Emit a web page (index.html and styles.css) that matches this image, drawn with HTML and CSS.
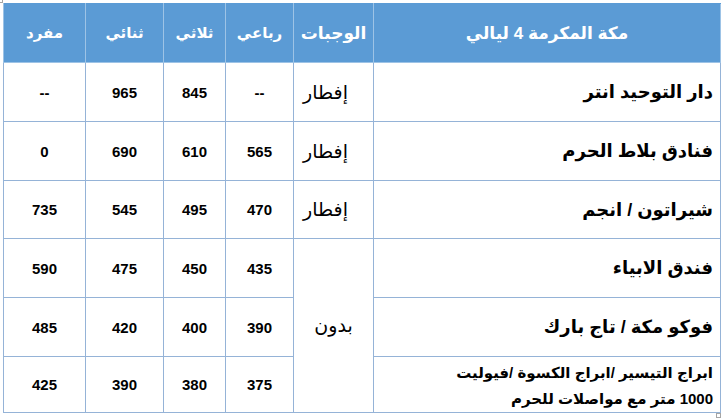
FILE: index.html
```html
<!DOCTYPE html>
<html lang="ar">
<head>
<meta charset="utf-8">
<link rel="stylesheet" href="styles.css">
</head>
<body>
<div class="page">
  <span class="handle handle-tl"></span>
  <table class="prices" dir="rtl">
    <colgroup>
      <col class="c-hotel">
      <col class="c-meal">
      <col class="c-quad">
      <col class="c-tri">
      <col class="c-dbl">
      <col class="c-sgl">
    </colgroup>
    <thead>
      <tr class="r-head">
        <th class="th-title">مكة المكرمة 4 ليالي</th>
        <th class="th-meal">الوجبات</th>
        <th>رباعي</th>
        <th>ثلاثي</th>
        <th>ثنائي</th>
        <th>مفرد</th>
      </tr>
    </thead>
    <tbody>
      <tr class="r1">
        <td class="hotel">دار التوحيد انتر</td>
        <td class="meal meal-side">إفطار</td>
        <td class="num">--</td>
        <td class="num">845</td>
        <td class="num">965</td>
        <td class="num">--</td>
      </tr>
      <tr class="r2">
        <td class="hotel">فنادق بلاط الحرم</td>
        <td class="meal meal-side">إفطار</td>
        <td class="num">565</td>
        <td class="num">610</td>
        <td class="num">690</td>
        <td class="num">0</td>
      </tr>
      <tr class="r3">
        <td class="hotel">شيراتون / انجم</td>
        <td class="meal meal-side">إفطار</td>
        <td class="num">470</td>
        <td class="num">495</td>
        <td class="num">545</td>
        <td class="num">735</td>
      </tr>
      <tr class="r4">
        <td class="hotel">فندق الابياء</td>
        <td class="meal" rowspan="3">بدون</td>
        <td class="num">435</td>
        <td class="num">450</td>
        <td class="num">475</td>
        <td class="num">590</td>
      </tr>
      <tr class="r5">
        <td class="hotel">فوكو مكة / تاج بارك</td>
        <td class="num">390</td>
        <td class="num">400</td>
        <td class="num">420</td>
        <td class="num">485</td>
      </tr>
      <tr class="r6">
        <td class="hotel hotel-2l">ابراج التيسير /ابراج الكسوة /فيوليت<br>1000 متر مع مواصلات للحرم</td>
        <td class="num">375</td>
        <td class="num">380</td>
        <td class="num">390</td>
        <td class="num">425</td>
      </tr>
    </tbody>
  </table>
  <span class="handle handle-br"></span>
</div>
</body>
</html>
```
FILE: styles.css
```css
html, body {
  margin: 0;
  padding: 0;
  background: #ffffff;
}

.page {
  position: relative;
  width: 725px;
  height: 420px;
  padding: 3px 0 0 3px;
  box-sizing: border-box;
}

.prices {
  border-collapse: collapse;
  table-layout: fixed;
  width: 717px;
  font-family: "Liberation Sans", "DejaVu Sans", Arial, sans-serif;
  color: #000000;
}

.c-hotel { width: 347px; }
.c-meal { width: 80px; }
.c-quad { width: 68px; }
.c-tri { width: 62px; }
.c-dbl { width: 78px; }
.c-sgl { width: 82px; }

.prices th,
.prices td {
  border: 1px solid #95b3d7;
  padding: 0;
  vertical-align: middle;
}

.prices th {
  background: #5b9bd5;
  color: #ffffff;
  font-weight: bold;
  font-size: 15px;
  text-align: center;
  border-color: #9dc3e6;
  border-top-color: #5b9bd5;
}

.prices .th-title {
  font-size: 17px;
}

.prices .th-meal {
  font-size: 17px;
}

.r-head { height: 59px; }
.r1 { height: 59px; }
.r2 { height: 59px; }
.r3 { height: 58px; }
.r4 { height: 59px; }
.r5 { height: 59px; }
.r6 { height: 56px; }

.num {
  text-align: center;
  font-weight: bold;
  font-size: 15px;
}

.meal {
  text-align: center;
  font-size: 19px;
  font-weight: normal;
}

.prices .meal-side {
  text-align: left;
  padding-left: 9px;
}

.hotel {
  text-align: right;
  font-weight: bold;
  font-size: 18px;
}

.prices .hotel {
  padding-right: 7px;
}

.prices .hotel-2l {
  font-size: 15px;
  line-height: 26px;
  padding-top: 2px;
}

.handle {
  position: absolute;
  width: 5px;
  height: 5px;
  border: 1px solid #a6a6a6;
  background: #ffffff;
  box-sizing: border-box;
}

.handle-tl {
  left: -2px;
  top: -2px;
}

.handle-br {
  left: 716px;
  top: 413px;
}
```
